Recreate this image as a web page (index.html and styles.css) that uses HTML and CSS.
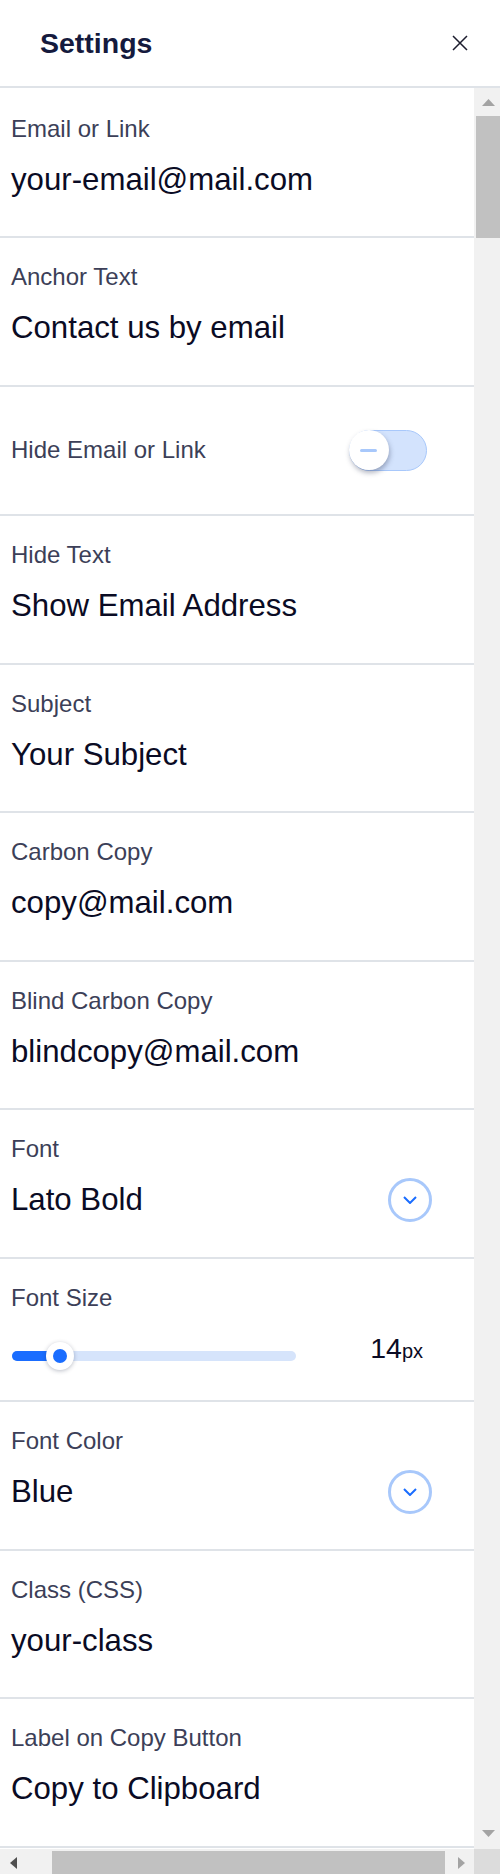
FILE: index.html
```html
<!DOCTYPE html>
<html lang="en">
<head>
    <meta charset="UTF-8">
    <meta name="viewport" content="width=device-width, initial-scale=1.0">
    <title>Settings</title>
    <link rel="stylesheet" href="styles.css">
</head>
<body>
    <div class="panel">
        <header class="panel-head">
            <h1>Settings</h1>
            <button class="close" type="button" aria-label="Close">
                <svg width="16" height="16" viewBox="0 0 16 16"><path d="M1 1L15 15M15 1L1 15" /></svg>
            </button>
        </header>

        <div class="panel-body">
            <div class="list">
                <div class="field first">
                    <div class="label">Email or Link</div>
                    <div class="value">your-email@mail.com</div>
                </div>
                <div class="field">
                    <div class="label">Anchor Text</div>
                    <div class="value">Contact us by email</div>
                </div>
                <div class="field switch-field">
                    <div class="label">Hide Email or Link</div>
                    <div class="toggle">
                        <span class="knob"><span class="dash"></span></span>
                    </div>
                </div>
                <div class="field">
                    <div class="label">Hide Text</div>
                    <div class="value">Show Email Address</div>
                </div>
                <div class="field">
                    <div class="label">Subject</div>
                    <div class="value">Your Subject</div>
                </div>
                <div class="field">
                    <div class="label">Carbon Copy</div>
                    <div class="value">copy@mail.com</div>
                </div>
                <div class="field">
                    <div class="label">Blind Carbon Copy</div>
                    <div class="value">blindcopy@mail.com</div>
                </div>
                <div class="field">
                    <div class="label">Font</div>
                    <div class="value select">
                        <span>Lato Bold</span>
                        <span class="chevron"><svg width="14" height="8" viewBox="0 0 14 8"><path d="M1 1l6 6 6-6" /></svg></span>
                    </div>
                </div>
                <div class="field slider-field">
                    <div class="label">Font Size</div>
                    <div class="slider-row">
                        <div class="slider">
                            <div class="slider-fill"></div>
                            <div class="slider-knob"><span></span></div>
                        </div>
                        <div class="size-value">14<small>px</small></div>
                    </div>
                </div>
                <div class="field">
                    <div class="label">Font Color</div>
                    <div class="value select">
                        <span>Blue</span>
                        <span class="chevron"><svg width="14" height="8" viewBox="0 0 14 8"><path d="M1 1l6 6 6-6" /></svg></span>
                    </div>
                </div>
                <div class="field">
                    <div class="label">Class (CSS)</div>
                    <div class="value">your-class</div>
                </div>
                <div class="field">
                    <div class="label">Label on Copy Button</div>
                    <div class="value">Copy to Clipboard</div>
                </div>
            </div>

            <div class="vbar">
                <div class="sb-btn up"><svg width="13" height="7" viewBox="0 0 13 7"><polygon points="0,7 6.5,0 13,7" /></svg></div>
                <div class="vthumb"></div>
                <div class="sb-track"></div>
                <div class="sb-btn down"><svg width="13" height="7" viewBox="0 0 13 7"><polygon points="0,0 13,0 6.5,7" /></svg></div>
            </div>
        </div>

        <div class="hbar">
            <div class="sb-btn left"><svg width="7" height="12" viewBox="0 0 7 12"><polygon points="7,0 7,12 0,6" /></svg></div>
            <div class="hthumb"></div>
            <div class="sb-track"></div>
            <div class="sb-btn right"><svg width="7" height="12" viewBox="0 0 7 12"><polygon points="0,0 7,6 0,12" /></svg></div>
            <div class="corner"></div>
        </div>
    </div>
</body>
</html>
```

FILE: styles.css
```css
* {
    box-sizing: border-box;
}
html, body {
    margin: 0;
    padding: 0;
}
body {
    font-family: "Liberation Sans", Arial, sans-serif;
    background-color: #fff;
}
.panel {
    display: flex;
    flex-direction: column;
    height: 1874px;
    overflow: hidden;
}

/* header */
.panel-head {
    flex: 0 0 88px;
    display: flex;
    align-items: center;
    justify-content: space-between;
    padding: 0 32px 0 40px;
    border-bottom: 2px solid #dfe3e8;
}
.panel-head h1 {
    margin: 0;
    font-size: 28.5px;
    line-height: 34px;
    font-weight: 700;
    color: #151a3d;
}
.close {
    display: flex;
    padding: 0;
    border: none;
    background: none;
    cursor: pointer;
}
.close path {
    stroke: #1c1d2e;
    stroke-width: 1.5;
    fill: none;
}

/* list */
.panel-body {
    flex: 1;
    min-height: 0;
    display: flex;
}
.list {
    flex: 1;
    overflow: hidden;
}
.field {
    padding: 25px 11px 38.5px;
    border-bottom: 2px solid #dfe3e8;
}
.field.first {
    padding-top: 26.5px;
}
.label {
    font-size: 24px;
    line-height: 28px;
    color: #3c3f58;
}
.value {
    margin-top: 19px;
    font-size: 31.2px;
    line-height: 36px;
    color: #0a0b24;
}
.select {
    display: flex;
    align-items: center;
    justify-content: space-between;
    margin-right: 31px;
}
.chevron {
    display: flex;
    align-items: center;
    justify-content: center;
    width: 44px;
    height: 44px;
    margin: -4px 0;
    border: 3px solid #a8c8fb;
    border-radius: 50%;
}
.chevron path {
    fill: none;
    stroke: #1a6dff;
    stroke-width: 2;
}

/* toggle */
.switch-field {
    display: flex;
    align-items: center;
    justify-content: space-between;
    padding-top: 43.375px;
    padding-bottom: 43.375px;
}
.toggle {
    display: flex;
    align-items: center;
    width: 78px;
    height: 41px;
    margin-right: 36px;
    background-color: #d3e3fd;
    border: 1.5px solid #a8c8fb;
    border-radius: 21px;
}
.knob {
    display: flex;
    align-items: center;
    justify-content: center;
    width: 40px;
    height: 40px;
    margin-left: -1.5px;
    background-color: #fff;
    border-radius: 50%;
    box-shadow: 1px 3px 5px rgba(40, 50, 80, 0.35);
}
.dash {
    width: 17px;
    height: 3px;
    border-radius: 2px;
    background-color: #a8c8fb;
}

/* slider */
.slider-field {
    padding-bottom: 22.25px;
}
.slider-row {
    display: flex;
    align-items: center;
    height: 44px;
    margin-top: 22px;
}
.slider {
    display: flex;
    align-items: center;
    width: 284px;
    height: 10px;
    margin-left: 1px;
    background-color: #d6e4fb;
    border-radius: 5px;
}
.slider-fill {
    width: 40px;
    height: 10px;
    background-color: #1a6dff;
    border-radius: 5px 0 0 5px;
}
.slider-knob {
    display: flex;
    align-items: center;
    justify-content: center;
    width: 28px;
    height: 28px;
    margin-left: -6px;
    background-color: #fff;
    border-radius: 50%;
    box-shadow: 0 1px 4px rgba(30, 40, 70, 0.3);
}
.slider-knob span {
    width: 14px;
    height: 14px;
    border-radius: 50%;
    background-color: #1a6dff;
}
.size-value {
    margin-left: auto;
    margin-right: 40px;
    margin-bottom: 13px;
    font-size: 28.5px;
    line-height: 34px;
    color: #0a0b24;
}
.size-value small {
    font-size: 20px;
}

/* scrollbars */
.vbar {
    flex: 0 0 26px;
    display: flex;
    flex-direction: column;
    background-color: #f1f1f1;
}
.sb-btn {
    display: flex;
    align-items: center;
    justify-content: center;
}
.sb-btn polygon {
    fill: #a3a3a3;
}
.vbar .sb-btn {
    height: 28px;
    padding-left: 2px;
}
.vbar .down {
    align-items: flex-start;
    padding-top: 9px;
}
.vthumb {
    height: 122px;
    margin-left: 2px;
    background-color: #c1c1c1;
}
.sb-track {
    flex: 1;
}
.hbar {
    flex: 0 0 25px;
    display: flex;
    background-color: #f1f1f1;
}
.hbar .sb-btn {
    width: 26px;
    padding-top: 3px;
}
.hbar .left polygon {
    fill: #505050;
}
.hthumb {
    width: 393px;
    margin: 2px 0 0 26px;
    background-color: #c1c1c1;
}
.corner {
    width: 26px;
    background-color: #dcdcdc;
}
```
